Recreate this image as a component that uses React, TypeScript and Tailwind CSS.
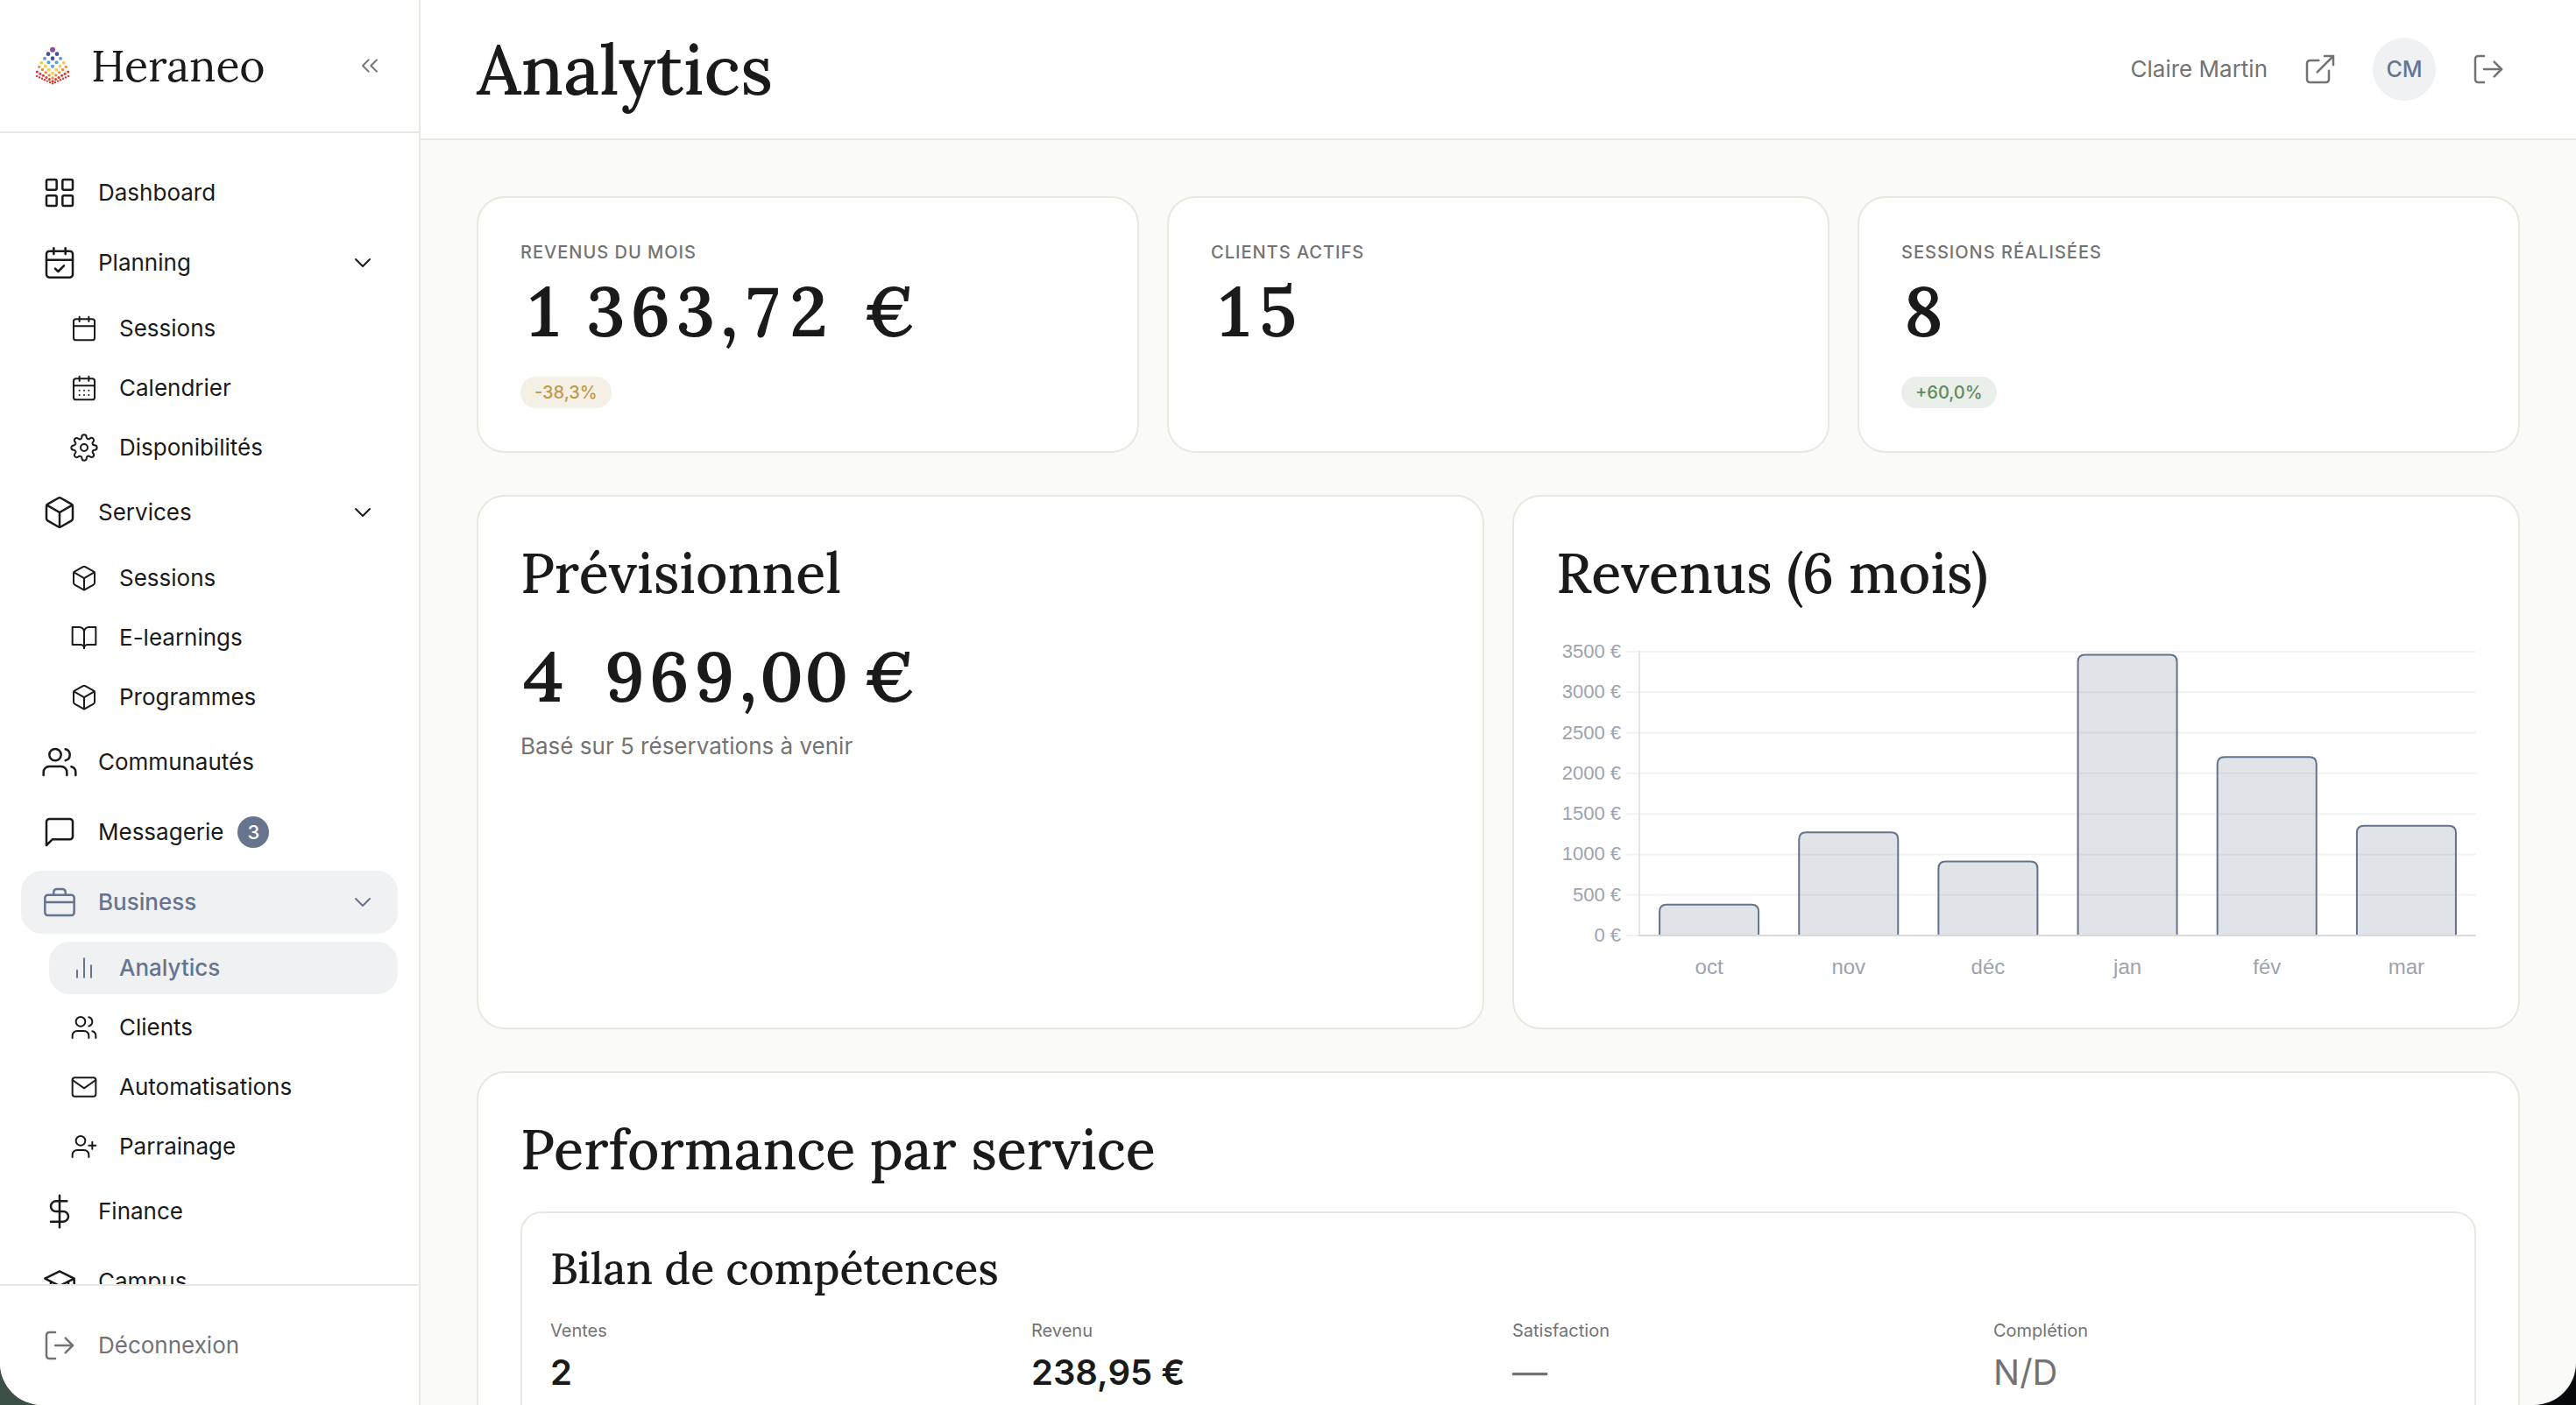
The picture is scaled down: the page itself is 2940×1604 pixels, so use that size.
import React from "react";
import {
  FiBarChart2,
  FiBookOpen,
  FiBox,
  FiCalendar,
  FiChevronDown,
  FiDollarSign,
  FiExternalLink,
  FiLogOut,
  FiMail,
  FiMessageSquare,
  FiSettings,
  FiUsers,
} from "react-icons/fi";
import { CalendarCheck, CalendarDays, ChevronsLeft, LayoutGrid, UserPlus, Users } from "lucide-react";

interface NavLeaf {
  label: string;
  icon: React.ReactNode;
  active?: boolean;
}

interface NavEntry extends NavLeaf {
  badge?: number;
  children?: NavLeaf[];
}

const BriefcaseIcon = () => (
  <svg className="size-10" viewBox="0 0 24 24" fill="none" stroke="currentColor" strokeWidth={1.5} strokeLinecap="round" strokeLinejoin="round">
    <rect x="2" y="7" width="20" height="14" rx="2" />
    <path d="M16 7V5a2 2 0 0 0-2-2h-4a2 2 0 0 0-2 2v2" />
    <path d="M2 12h20M12 12h.01" />
  </svg>
);

const CampusIcon = () => (
  <svg className="size-10" viewBox="0 0 24 24" fill="none" stroke="currentColor" strokeWidth={1.5} strokeLinecap="round" strokeLinejoin="round">
    <path d="M22 10v6M2 10l10-5 10 5-10 5z" />
    <path d="M6 12v5c3 3 9 3 12 0v-5" />
  </svg>
);

const navigation: NavEntry[] = [
  { label: "Dashboard", icon: <LayoutGrid className="size-10" strokeWidth={1.5} /> },
  {
    label: "Planning",
    icon: <CalendarCheck className="size-10" strokeWidth={1.5} />,
    children: [
      { label: "Sessions", icon: <FiCalendar className="size-8" strokeWidth={1.5} /> },
      { label: "Calendrier", icon: <CalendarDays className="size-8" strokeWidth={1.5} /> },
      { label: "Disponibilités", icon: <FiSettings className="size-8" strokeWidth={1.5} /> },
    ],
  },
  {
    label: "Services",
    icon: <FiBox className="size-10" strokeWidth={1.5} />,
    children: [
      { label: "Sessions", icon: <FiBox className="size-8" strokeWidth={1.5} /> },
      { label: "E-learnings", icon: <FiBookOpen className="size-8" strokeWidth={1.5} /> },
      { label: "Programmes", icon: <FiBox className="size-8" strokeWidth={1.5} /> },
    ],
  },
  { label: "Communautés", icon: <FiUsers className="size-10" strokeWidth={1.5} /> },
  { label: "Messagerie", icon: <FiMessageSquare className="size-10" strokeWidth={1.5} />, badge: 3 },
  {
    label: "Business",
    icon: <BriefcaseIcon />,
    active: true,
    children: [
      { label: "Analytics", icon: <FiBarChart2 className="size-8" strokeWidth={1.5} />, active: true },
      { label: "Clients", icon: <Users className="size-8" strokeWidth={1.5} /> },
      { label: "Automatisations", icon: <FiMail className="size-8" strokeWidth={1.5} /> },
      { label: "Parrainage", icon: <UserPlus className="size-8" strokeWidth={1.5} /> },
    ],
  },
  { label: "Finance", icon: <FiDollarSign className="size-10" strokeWidth={1.5} /> },
  { label: "Campus", icon: <CampusIcon /> },
];

// Each arc is a V of dots: outermost offset and height, lowest point, dot count per side
const logoArcs = [
  { color: "#8e4f9e", dx: 0, top: 50, bottom: 50, steps: 0, r: 9 },
  { color: "#4350a0", dx: 15, top: 65, bottom: 80, steps: 1, r: 7 },
  { color: "#5b9bd8", dx: 27, top: 80, bottom: 107, steps: 2, r: 6 },
  { color: "#f7cb45", dx: 38, top: 95, bottom: 131, steps: 3, r: 5.5 },
  { color: "#ee8a3a", dx: 46, top: 109, bottom: 147, steps: 4, r: 5 },
  { color: "#e2332c", dx: 53, top: 126, bottom: 158, steps: 5, r: 4.5 },
  { color: "#dd2f2f", dx: 54, top: 141, bottom: 166, steps: 6, r: 3.5 },
];

const Logo = () => (
  <svg className="size-14 shrink-0" viewBox="6 21 168 168" aria-hidden="true">
    {logoArcs.map((arc) =>
      Array.from({ length: arc.steps * 2 + 1 }, (_, i) => {
        const t = arc.steps === 0 ? 0 : (i - arc.steps) / arc.steps;
        return (
          <circle
            key={`${arc.top}-${i}`}
            cx={90 + t * arc.dx}
            cy={arc.bottom - Math.abs(t) * (arc.bottom - arc.top)}
            r={arc.r}
            fill={arc.color}
          />
        );
      })
    )}
  </svg>
);

const NavItem: React.FC<{ entry: NavEntry }> = ({ entry }) => (
  <li>
    <button
      type="button"
      className={`flex h-[72px] w-full items-center gap-6 rounded-3xl px-6 text-left ${
        entry.active ? "bg-[#eff1f3] font-medium text-[#67748e]" : ""
      }`}
    >
      {entry.icon}
      <span className="flex flex-1 items-center gap-4">
        {entry.label}
        {entry.badge && (
          <span className="flex size-9 items-center justify-center rounded-full bg-[#67748e] text-[22px] leading-none font-medium text-white">
            {entry.badge}
          </span>
        )}
      </span>
      {entry.children && <FiChevronDown className="size-8" strokeWidth={1.5} />}
    </button>
    {entry.children && (
      <ul className="mt-[9px] ml-8 flex flex-col gap-2">
        {entry.children.map((child) => (
          <li key={child.label}>
            <a
              href="#"
              className={`flex h-[60px] items-center gap-6 rounded-3xl px-6 ${
                child.active ? "bg-[#eff1f3] font-medium text-[#67748e]" : ""
              }`}
            >
              {child.icon}
              {child.label}
            </a>
          </li>
        ))}
      </ul>
    )}
  </li>
);

const Sidebar = () => (
  <aside className="flex w-[480px] shrink-0 flex-col border-r-2 border-[#e8e8e0] bg-white">
    <div className="flex h-[152px] shrink-0 items-center justify-between border-b-2 border-[#e8e8e0] px-8">
      <div className="flex items-center gap-4">
        <Logo />
        <span className="font-[Lora,serif] text-[50px] leading-none">Heraneo</span>
      </div>
      <button type="button" aria-label="Réduire le menu" className="p-2 text-[#737373]">
        <ChevronsLeft className="size-8" strokeWidth={1.5} />
      </button>
    </div>
    <nav className="min-h-0 flex-1 overflow-hidden px-6 pt-8">
      <ul className="flex flex-col gap-2">
        {navigation.map((entry) => (
          <NavItem key={entry.label} entry={entry} />
        ))}
      </ul>
    </nav>
    <div className="shrink-0 border-t-2 border-[#e8e8e0] px-6 py-8">
      <button type="button" className="flex h-[72px] w-full items-center gap-6 px-6 text-[#737373]">
        <FiLogOut className="size-10" strokeWidth={1.5} />
        Déconnexion
      </button>
    </div>
  </aside>
);

const Header = () => (
  <header className="flex h-[160px] shrink-0 items-center justify-between border-b-2 border-[#e8e8e0] bg-white px-16">
    <h1 className="font-[Lora,serif] text-[79px] leading-none font-medium">Analytics</h1>
    <div className="flex items-center gap-6 text-[#737373]">
      <span>Claire Martin</span>
      <a href="#" aria-label="Voir le site" className="p-4">
        <FiExternalLink className="size-10" strokeWidth={1.5} />
      </a>
      <span className="flex size-[72px] items-center justify-center rounded-full bg-[#eff1f3] text-[25px] font-medium text-[#67748e]">
        CM
      </span>
      <button type="button" aria-label="Se déconnecter" className="p-4">
        <FiLogOut className="size-10" strokeWidth={1.5} />
      </button>
    </div>
  </header>
);

const Card: React.FC<{ children: React.ReactNode }> = ({ children }) => (
  <section className="rounded-[32px] border-2 border-[#e8e8e0] bg-white p-12">{children}</section>
);

const CardTitle: React.FC<{ children: React.ReactNode }> = ({ children }) => (
  <h2 className="mb-8 font-[Lora,serif] text-[63px] leading-[78px] font-medium">{children}</h2>
);

const BigValue: React.FC<{ children: React.ReactNode }> = ({ children }) => (
  <p className="font-[Lora,serif] text-[79px] leading-[96px] font-semibold whitespace-nowrap tabular-nums">{children}</p>
);

interface StatCardProps {
  label: string;
  value: string;
  trend?: string;
  positive?: boolean;
}

const StatCard: React.FC<StatCardProps> = ({ label, value, trend, positive }) => (
  <Card>
    <p className="mb-1.5 text-[20px] leading-7 font-medium tracking-wider text-[#737373] uppercase">{label}</p>
    <BigValue>{value}</BigValue>
    <div className="mt-6 flex h-[39px] items-center">
      {trend && (
        <span
          className={`flex h-9 items-center rounded-full px-4 text-[20px] font-medium ${
            positive ? "bg-[#eaefea] text-[#5f8a5a]" : "bg-[#f5f0e6] text-[#c09a4a]"
          }`}
        >
          {trend}
        </span>
      )}
    </div>
  </Card>
);

const revenue = [
  { month: "oct", amount: 382 },
  { month: "nov", amount: 1273 },
  { month: "déc", amount: 912 },
  { month: "jan", amount: 3461 },
  { month: "fév", amount: 2200 },
  { month: "mar", amount: 1354 },
];

const ticks = [0, 500, 1000, 1500, 2000, 2500, 3000, 3500];

const AXIS_X = 95;
const RIGHT = 1050;
const TOP = 19;
const BASE = 343;

const yFor = (amount: number) => BASE - (amount / 3500) * (BASE - TOP);

const RevenueChart = () => {
  const slot = (RIGHT - AXIS_X) / revenue.length;
  const width = slot * 0.71;

  return (
    <svg viewBox="0 0 1050 400" className="block w-full font-['Liberation_Sans',Arial,sans-serif]" role="img" aria-label="Revenus (6 mois)">
      {ticks.map((tick) => (
        <g key={tick}>
          <line x1={80} x2={RIGHT} y1={yFor(tick)} y2={yFor(tick)} stroke="#f3f3f4" strokeWidth={2} />
          <text x={74} y={yFor(tick) + 7} textAnchor="end" className="fill-[#9ca3af] text-[22px]">
            {tick} €
          </text>
        </g>
      ))}
      <line x1={AXIS_X} x2={AXIS_X} y1={TOP - 1} y2={BASE} stroke="#e5e5e6" strokeWidth={2} />
      {revenue.map(({ month, amount }, i) => {
        const center = AXIS_X + slot * (i + 0.5);
        const left = center - width / 2;
        const right = center + width / 2;
        const top = yFor(amount);
        return (
          <g key={month}>
            <path
              d={`M${left} ${BASE}V${top + 8}Q${left} ${top} ${left + 8} ${top}H${right - 8}Q${right} ${top} ${right} ${top + 8}V${BASE}`}
              fill="#64748b"
              fillOpacity={0.2}
              stroke="#64748b"
              strokeWidth={2}
            />
            <text x={center} y={387} textAnchor="middle" className="fill-[#9ca3af] text-[24px]">
              {month}
            </text>
          </g>
        );
      })}
      <line x1={AXIS_X - 1} x2={RIGHT} y1={BASE} y2={BASE} stroke="#d9dadc" strokeWidth={2} />
    </svg>
  );
};

const serviceMetrics = [
  { label: "Ventes", value: "2" },
  { label: "Revenu", value: "238,95 €" },
  { label: "Satisfaction", value: "—", empty: true },
  { label: "Complétion", value: "N/D", empty: true },
];

export default function App() {
  return (
    <div className="h-screen overflow-hidden bg-linear-to-r from-[#3c5048] to-[#05090b]">
      <div className="flex h-full overflow-hidden rounded-b-[48px] bg-[#fafaf8] font-[Inter,sans-serif] text-[26px] leading-10 text-[#1a1a1a]">
        <Sidebar />
        <div className="flex min-w-0 flex-1 flex-col">
          <Header />
          <main className="flex min-h-0 flex-1 flex-col gap-12 overflow-hidden p-16 *:shrink-0">
            <div className="grid grid-cols-3 gap-8">
              <StatCard label="Revenus du mois" value={"1\u202f363,72\u00a0\u00a0€"} trend="-38,3%" />
              <StatCard label="Clients actifs" value="15" />
              <StatCard label="Sessions réalisées" value="8" trend="+60,0%" positive />
            </div>

            <div className="grid grid-cols-2 gap-8">
              <Card>
                <CardTitle>Prévisionnel</CardTitle>
                <BigValue>{"4\u00a0\u00a0969,00\u202f€"}</BigValue>
                <p className="mt-3 leading-[38px] text-[#737373]">Basé sur 5 réservations à venir</p>
              </Card>
              <Card>
                <CardTitle>Revenus (6 mois)</CardTitle>
                <RevenueChart />
              </Card>
            </div>

            <Card>
              <CardTitle>Performance par service</CardTitle>
              <div className="rounded-3xl border-2 border-[#e8e8e0] p-8">
                <h3 className="font-[Lora,serif] text-[50px] leading-[62px] font-medium">Bilan de compétences</h3>
                <dl className="mt-6 grid grid-cols-4 gap-8">
                  {serviceMetrics.map((metric) => (
                    <div key={metric.label}>
                      <dt className="text-[20px] leading-8 text-[#737373]">{metric.label}</dt>
                      <dd className={`text-[40px] leading-[64px] ${metric.empty ? "text-[#737373]" : "font-semibold"}`}>
                        {metric.value}
                      </dd>
                    </div>
                  ))}
                </dl>
              </div>
            </Card>
          </main>
        </div>
      </div>
    </div>
  );
}
